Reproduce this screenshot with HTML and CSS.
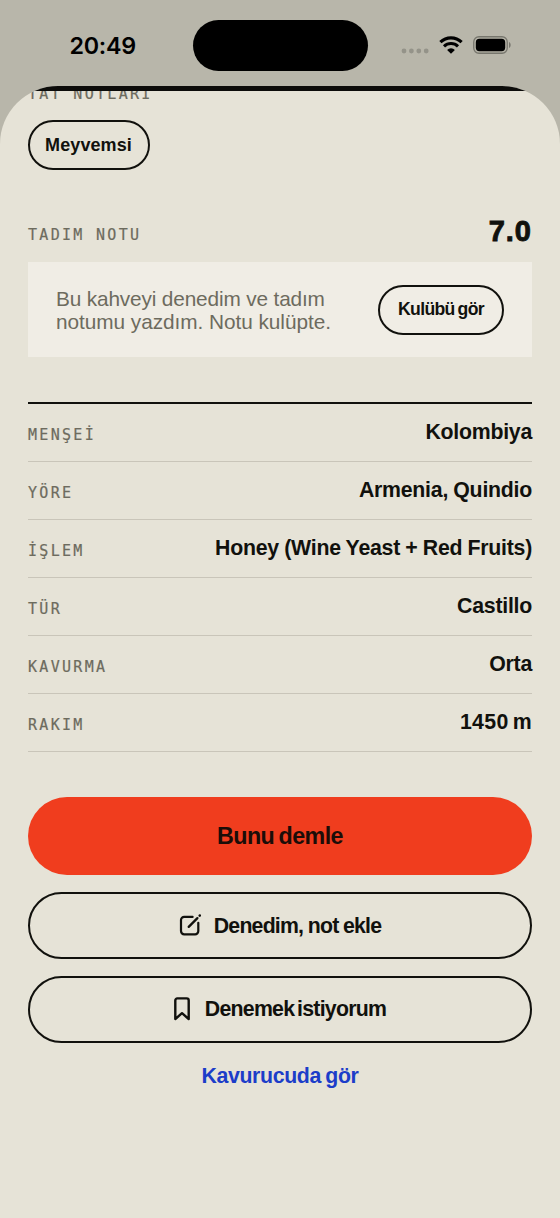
FILE: index.html
```html
<!DOCTYPE html>
<html lang="tr">
<head>
<meta charset="utf-8">
<title>Kahve</title>
<link rel="stylesheet" href="styles.css">
</head>
<body>
<div class="phone">
  <header class="status">
    <div class="time">20:49</div>
    <div class="island"></div>
    <div class="indicators">
      <svg class="dots" width="28" height="6" viewBox="0 0 28 6"><circle cx="3" cy="3" r="2.4"/><circle cx="10.4" cy="3" r="2.4"/><circle cx="17.8" cy="3" r="2.4"/><circle cx="25.2" cy="3" r="2.4"/></svg>
      <svg class="wifi" width="24" height="18" viewBox="0 0 24 18"><path d="M1.4 6.2a15.2 15.2 0 0 1 21.2 0" fill="none" stroke="#000" stroke-width="3.2"/><path d="M5 10.4a10 10 0 0 1 14 0" fill="none" stroke="#000" stroke-width="3"/><path d="M12 17.8l-3.9-3.9a5.6 5.6 0 0 1 7.8 0z"/></svg>
      <svg class="battery" width="39" height="18" viewBox="0 0 39 18"><rect x=".75" y=".75" width="33.5" height="16.5" rx="5.2" fill="none" stroke="#77766d" stroke-width="1.3"/><rect x="2.8" y="2.8" width="29.4" height="12.4" rx="3.6"/><path d="M36 6c2.2.8 2.2 5.2 0 6z" fill="#77766d"/></svg>
    </div>
  </header>
  <main class="sheet">
    <div class="sheet-edge"></div>
    <div class="content">
      <div class="label clipped">TAT NOTLARI</div>
      <div class="pill chip">Meyvemsi</div>
      <div class="score-row"><span class="label">TADIM NOTU</span><span class="score">7.0</span></div>
      <section class="note">
        <p class="note-text">Bu kahveyi denedim ve tadım<br><span class="note-wide">notumu yazdım. Notu kulüpte.</span></p>
        <div class="pill club">Kulübü gör</div>
      </section>
      <dl class="specs">
        <div class="spec"><dt class="label">MENŞEİ</dt><dd class="value">Kolombiya</dd></div>
        <div class="spec"><dt class="label">YÖRE</dt><dd class="value">Armenia, Quindio</dd></div>
        <div class="spec"><dt class="label">İŞLEM</dt><dd class="value">Honey (Wine Yeast + Red Fruits)</dd></div>
        <div class="spec"><dt class="label">TÜR</dt><dd class="value">Castillo</dd></div>
        <div class="spec"><dt class="label">KAVURMA</dt><dd class="value">Orta</dd></div>
        <div class="spec"><dt class="label">RAKIM</dt><dd class="value altitude">1450 m</dd></div>
      </dl>
      <div class="actions">
        <div class="primary">Bunu demle</div>
        <div class="outline">
          <svg class="icon-edit" width="22" height="22" viewBox="0 0 22 22" fill="none" stroke="#11110d" stroke-width="2.2" stroke-linecap="round"><path d="M13.6 2.9H5.2a3.2 3.2 0 0 0-3.2 3.2v11a3.2 3.2 0 0 0 3.2 3.2h10.9a3.2 3.2 0 0 0 3.2-3.2V8.8"/><path d="M9.7 12.9l8.7-8.8" stroke-width="2.3"/><path d="M20.7 1.6l.1-.1" stroke-width="2.5"/></svg>
          <span class="try-text">Denedim, not ekle</span>
        </div>
        <div class="outline">
          <svg class="icon-mark" width="16" height="24" viewBox="0 0 16 24" fill="none" stroke="#11110d" stroke-width="2.4" stroke-linejoin="round"><path d="M1.3 22V3.4a2 2 0 0 1 2-2h9.4a2 2 0 0 1 2 2V22L8 16.2z"/></svg>
          <span class="want-text">Denemek istiyorum</span>
        </div>
      </div>
      <div class="link">Kavurucuda gör</div>
    </div>
  </main>
</div>
</body>
</html>
```

FILE: styles.css
```css
* { box-sizing: border-box; }
body { margin: 0; background: #b8b6aa; }
.phone {
  width: 560px;
  height: 1218px;
  overflow: hidden;
  background: #b8b6aa;
  color: #11110d;
  font-family: "Liberation Sans", Arial, sans-serif;
  font-weight: 700;
  white-space: nowrap;
}
.status {
  height: 86px;
  display: grid;
  grid-template-columns: 192.5px 175px 192.5px;
  padding-top: 19.5px;
  color: #000;
}
.time {
  padding: 12.5px 0 0 69.5px;
  font: 560 23.3px/28px Inter, sans-serif;
  letter-spacing: -.3px;
}
.island { height: 51px; border-radius: 25.5px; background: #000; }
.indicators { display: flex; align-items: flex-start; padding: 16.5px 0 0 33.5px; }
.dots { margin-top: 12px; fill: #949389; }
.wifi { margin-left: 10px; }
.battery { margin-left: 10px; }
.sheet {
  height: 1132px;
  overflow: hidden;
  border-radius: 58px 58px 0 0;
  background: #e6e3d7;
}
.sheet-edge { height: 4.5px; background: #0c0c0a; }
.content { height: 1127.5px; overflow: hidden; padding: 0 28px; }
.label {
  font: 400 15px/20px "DejaVu Sans Mono", monospace;
  letter-spacing: 2.3px;
  color: #6d6b5e;
  -webkit-text-stroke: .2px #6d6b5e;
}
.clipped { margin-top: -6.5px; }
.pill {
  display: flex;
  align-items: center;
  justify-content: center;
  height: 50px;
  border: 2px solid #11110d;
  border-radius: 25px;
}
.chip { width: 122px; margin-top: 16px; padding-right: 1px; font-size: 18px; letter-spacing: .1px; }
.score-row {
  display: flex;
  justify-content: space-between;
  align-items: flex-start;
  height: 36px;
  margin-top: 43px;
}
.score-row .label { padding-top: 12px; }
.score { font-size: 29px; line-height: 36px; letter-spacing: 1px; -webkit-text-stroke: .9px #11110d; }
.note {
  display: flex;
  align-items: center;
  justify-content: space-between;
  height: 95px;
  margin-top: 13px;
  padding: 0 28px;
  background: #f0ede5;
}
.note-text { margin: 0; font-weight: 400; font-size: 20.8px; line-height: 23px; letter-spacing: -.15px; color: #6d6b5e; }
.note-wide { letter-spacing: -.05px; }
.club { width: 126px; font-size: 17.6px; letter-spacing: -.65px; word-spacing: -1.3px; }
.specs { margin: 45px 0 0; border-top: 2px solid #11110d; }
.spec {
  display: flex;
  justify-content: space-between;
  align-items: center;
  height: 58px;
  border-bottom: 1px solid #c9c5b9;
}
.spec .label { padding-top: 4px; }
.value { margin: 0; font-size: 21.3px; letter-spacing: -.25px; word-spacing: -.4px; }
.altitude { letter-spacing: .3px; word-spacing: -2px; }
.actions { display: grid; gap: 17px; margin-top: 44.5px; }
.primary, .outline { display: flex; align-items: center; justify-content: center; }
.primary { height: 78px; padding-top: 1px; border-radius: 39px; background: #f03d1e; color: #1b0d08; font-size: 23.3px; letter-spacing: -.6px; word-spacing: -1.5px; }
.outline { height: 67px; border: 2px solid #11110d; border-radius: 34px; font-size: 21.3px; }
.icon-edit { margin-right: 13px; }
.try-text { padding-top: 3px; letter-spacing: -.8px; word-spacing: -.6px; }
.icon-mark { margin-right: 15px; }
.want-text { letter-spacing: -.75px; word-spacing: -2.4px; }
.link { margin-top: 20px; text-align: center; font-size: 21.3px; line-height: 26px; letter-spacing: -.35px; word-spacing: -1.3px; color: #1c3dc9; }
```
